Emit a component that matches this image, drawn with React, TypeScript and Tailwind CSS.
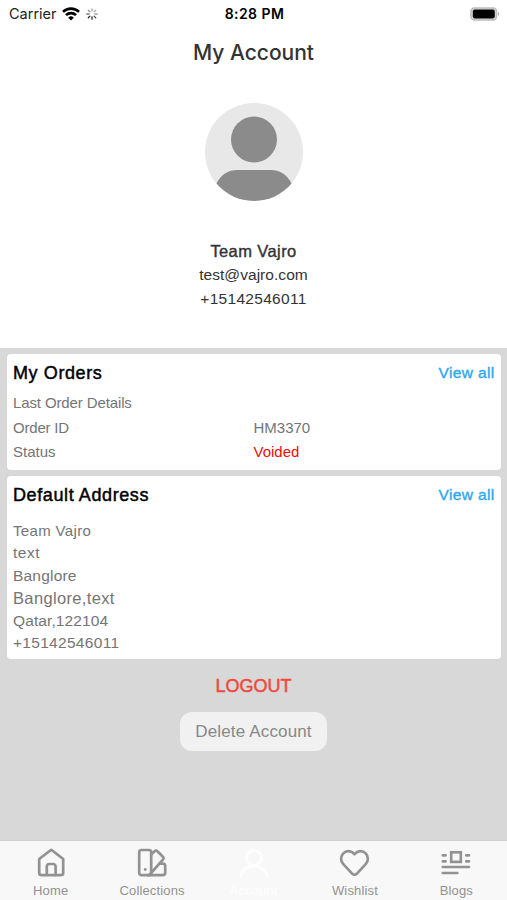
import type { ReactNode } from 'react';

const addressLines = [
  { text: 'Team Vajro', className: 'text-[15px] tracking-[0.35px]' },
  { text: 'text', className: 'text-[15.5px] tracking-[0.5px]' },
  { text: 'Banglore', className: 'text-[15.5px] tracking-[0.2px]' },
  { text: 'Banglore,text', className: 'text-[16.5px] tracking-[0.35px]' },
  { text: 'Qatar,122104', className: 'text-[15.5px] tracking-[0.1px]' },
  { text: '+15142546011', className: 'text-[15.5px] tracking-[0.3px]' },
];

function StatusBar() {
  return (
    <div className="flex h-7 items-center justify-between pl-[9px] pr-[7px] font-['Inter',sans-serif] text-black">
      <div className="flex w-40 items-center">
        <span className="text-[14.5px] leading-7 text-[#222]">Carrier</span>
        <svg width="18" height="14" viewBox="0 0 18 14" className="ml-[5px]">
          <g fill="none" stroke="#000" strokeWidth="2.6">
            <path d="M1 4.9a11.4 11.4 0 0 1 16 0" />
            <path d="M4 8.2a7.1 7.1 0 0 1 10 0" />
          </g>
          <path d="M9 13.5 6.2 10.7a4 4 0 0 1 5.6 0Z" />
        </svg>
        <svg width="12" height="12" viewBox="0 0 12 12" className="ml-[6px]" stroke="#222" strokeWidth="1.3" strokeLinecap="round">
          <path d="M6 .8v2.3" opacity=".4" />
          <path d="m9.7 2.3-1.6 1.6" opacity=".4" />
          <path d="M11.2 6H8.9" opacity=".45" />
          <path d="m9.7 9.7-1.6-1.6" opacity=".8" />
          <path d="M6 11.2V8.9" />
          <path d="m2.3 9.7 1.6-1.6" />
          <path d="M.8 6h2.3" opacity=".6" />
          <path d="m2.3 2.3 1.6 1.6" opacity=".5" />
        </svg>
      </div>
      <span className="text-[14px] font-semibold leading-7 tracking-[0.45px]">8:28 PM</span>
      <div className="flex w-40 justify-end">
        <svg width="30" height="14" viewBox="0 0 30 14" className="-mt-px">
          <rect x="1" y="1" width="25.5" height="12" rx="3.4" fill="#ddd" stroke="#bcbcbc" strokeWidth="1.6" />
          <rect x="2.8" y="2.6" width="22" height="8.8" rx="1.8" />
          <path d="M28 5v4c1.600-.5 1.600-3.500 0-4Z" fill="#aaa" />
        </svg>
      </div>
    </div>
  );
}

function Avatar() {
  return (
    <svg width="98" height="98" viewBox="0 0 98 98" className="block">
      <circle cx="49" cy="49" r="49" fill="#e8e8e8" />
      <circle cx="49" cy="36.500" r="23" fill="#8b8b8b" />
      <path d="M11.500 80.500C16 71 24 67 32 67h34c8 0 16 4 20.500 13.500A49 49 0 0 1 11.500 80.500Z" fill="#8b8b8b" />
    </svg>
  );
}

function CardHeader({ title }: { title: string }) {
  return (
    <div className="flex h-6 items-center justify-between">
      <h2 className="text-[18px] tracking-[0.6px] text-black [-webkit-text-stroke:0.45px_#000]">{title}</h2>
      <a className="text-[15.5px] tracking-[0.35px] text-[#2ba6f0] [-webkit-text-stroke:0.35px_#2ba6f0]">View all</a>
    </div>
  );
}

function TabItem({ label, children, className }: { label: string; children: ReactNode; className?: string }) {
  return (
    <div className={`flex flex-1 flex-col items-center pt-[6px] ${className ?? 'text-[#929292]'}`}>
      <svg width="32" height="32" viewBox="0 0 32 32" fill="none" stroke="currentColor" strokeWidth="2.7" strokeLinecap="round" strokeLinejoin="round">
        {children}
      </svg>
      <span className="mt-[3px] text-[13px] leading-[18px] tracking-[0.15px]">{label}</span>
    </div>
  );
}

export default function App() {
  return (
    <div className="flex h-[900px] w-[507px] flex-col overflow-hidden bg-[#d8d8d8] font-['Liberation_Sans',sans-serif]">
      {/* Profile */}
      <header className="flex h-[348px] flex-col bg-white text-[#333]">
        <StatusBar />
        <h1 className="mt-[10px] text-center font-['Inter',sans-serif] text-[21px] font-medium leading-[30px]">My Account</h1>
        <div className="mt-[35px] flex flex-col items-center">
          <Avatar />
          <div className="mt-[38px] text-[16.5px] leading-6 tracking-[0.4px] [-webkit-text-stroke:0.4px_#333]">Team Vajro</div>
          <div className="text-[15.5px] leading-6 tracking-[0.05px]">test@vajro.com</div>
          <div className="text-[15.5px] leading-6 tracking-[0.3px]">+15142546011</div>
        </div>
      </header>

      <main className="flex flex-1 flex-col items-center pt-[6px]">
        {/* Orders */}
        <section className="h-[116px] w-[494px] rounded-[4px] bg-white pl-[6.5px] pr-[6px] pt-[7px] text-[15px] text-[#757575]">
          <CardHeader title="My Orders" />
          <div className="mt-[6px] leading-[24.5px] tracking-[-0.12px]">Last Order Details</div>
          <div className="flex leading-[24.5px]">
            <span className="w-[240.5px] tracking-[-0.2px]">Order ID</span>
            <span>HM3370</span>
          </div>
          <div className="flex leading-[24.5px]">
            <span className="w-[240.5px]">Status</span>
            <span className="text-[#f00b0b]">Voided</span>
          </div>
        </section>

        {/* Address */}
        <section className="mt-[6px] h-[183px] w-[494px] rounded-[4px] bg-white pl-[6.5px] pr-[6px] pt-[7px] text-[#757575]">
          <CardHeader title="Default Address" />
          <div className="mt-[13px]">
            {addressLines.map((line) => (
              <div key={line.text} className={`h-[22.4px] leading-[22.4px] ${line.className}`}>{line.text}</div>
            ))}
          </div>
        </section>

        <button className="mt-[15px] text-[18px] leading-6 text-[#f4463c] [-webkit-text-stroke:0.45px_#f4463c]">LOGOUT</button>
        <button className="mt-[14px] h-[39px] w-[147px] rounded-[12px] bg-[#f1f1f1] text-[17px] tracking-[0.15px] text-[#888]">Delete Account</button>
      </main>

      {/* Tab bar */}
      <nav className="flex h-[60px] border-t border-[#cfcfcf] bg-[#f8f8f8]">
        <TabItem label="Home">
          <path d="M16.2 2.800 4.200 12V25.700a2.500 2.500 0 0 0 2.500 2.500h19a2.500 2.500 0 0 0 2.500-2.500V12Z" />
          <path d="M11.800 28V19.500a2.500 2.500 0 0 1 2.500-2.500h3.800a2.500 2.500 0 0 1 2.500 2.500V28" />
        </TabItem>
        <TabItem label="Collections">
          <rect x="3.200" y="3" width="12" height="25.200" rx="2.200" />
          <path d="m15.200 7.500 3.300-3.300a2 2 0 0 1 2.900 0l5.500 5.500a2 2 0 0 1 0 2.900L14.200 27" />
          <path d="M24.500 16.700h2.300a2.400 2.400 0 0 1 2.400 2.400v6.700a2.400 2.400 0 0 1-2.400 2.400H12" />
          <circle cx="9.200" cy="22.500" r="1.400" fill="currentColor" stroke="none" />
        </TabItem>
        <TabItem label="Account" className="text-white/80">
          <circle cx="16" cy="11" r="7.500" />
          <path d="M3 29c1-6 6-10 13-10s12 4 13 10" />
        </TabItem>
        <TabItem label="Wishlist">
          <path d="M15.500 7.200C12.200 3.400 7.300 3.300 4.300 6.400s-2.900 7.700 0 10.800l8.800 9.400a3.200 3.200 0 0 0 4.800 0l8.800-9.400c2.900-3.100 2.900-7.700 0-10.800S18.800 3.400 15.500 7.200Z" />
        </TabItem>
        <TabItem label="Blogs">
          <rect x="11.200" y="5.300" width="9.600" height="9.600" strokeLinejoin="miter" />
          <path d="M2.800 8.300h2.800M2.800 14.300h2.800M26.200 8.300H29M26.200 14.300H29M2.800 20h26.200M2.800 26h14.500" />
        </TabItem>
      </nav>
    </div>
  );
}
